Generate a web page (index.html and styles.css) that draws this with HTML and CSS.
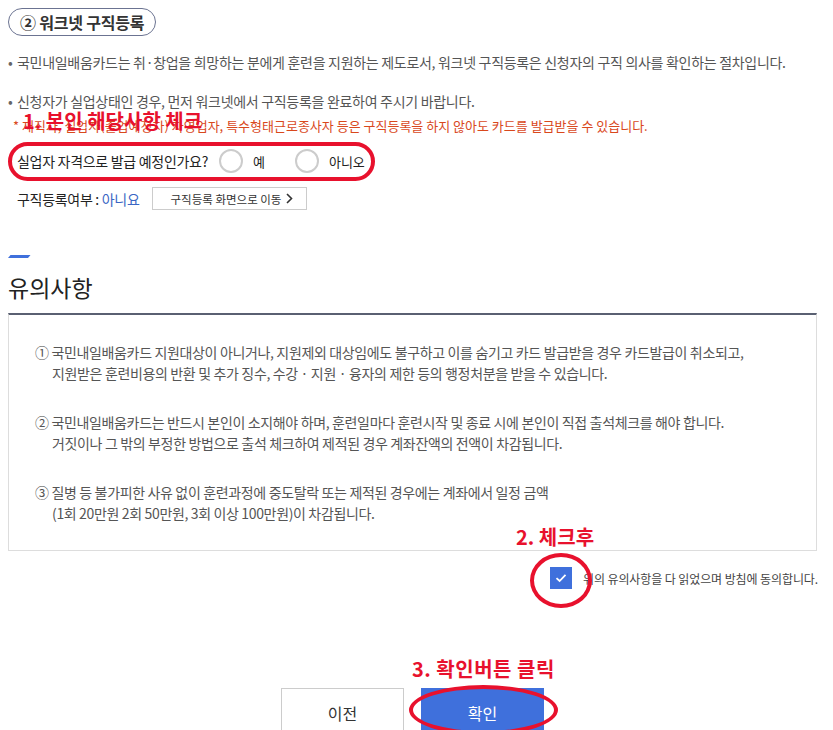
FILE: index.html
```html
<!DOCTYPE html>
<html>

<head>
    <meta name="viewport" content="width=device-width, initial-scale=1.0">
    <title>워크넷 구직등록</title>
    <link rel="stylesheet" href="styles.css">
</head>

<body>
    <div class="page">
        <div class="step-badge">② 워크넷 구직등록</div>

        <ul class="info-list">
            <li>국민내일배움카드는 취·창업을 희망하는 분에게 훈련을 지원하는 제도로서, 워크넷 구직등록은 신청자의 구직 의사를 확인하는 절차입니다.</li>
            <li class="gap">신청자가 실업상태인 경우, 먼저 워크넷에서 구직등록을 완료하여 주시기 바랍니다.</li>
        </ul>
        <p class="warn-note">* 재직자, 실업자(졸업예정자) 자영업자, 특수형태근로종사자 등은 구직등록을 하지 않아도 카드를 발급받을 수 있습니다.</p>

        <div class="question-row">
            <span class="question">실업자 자격으로 발급 예정인가요?</span>
            <label class="radio"><span class="radio-dot"></span>예</label>
            <label class="radio"><span class="radio-dot"></span>아니오</label>
        </div>

        <div class="status-row">
            <span class="status-label">구직등록여부 : <em>아니요</em></span>
            <button class="link-button">구직등록 화면으로 이동
                <svg class="chevron" width="7" height="11" viewBox="0 0 7 11"><path d="M1 1 L5.5 5.5 L1 10" fill="none" stroke="#333" stroke-width="1.6"/></svg>
            </button>
        </div>

        <div class="section-mark"></div>
        <h2 class="section-title">유의사항</h2>

        <div class="notice-box">
            <p class="notice-item">① 국민내일배움카드 지원대상이 아니거나, 지원제외 대상임에도 불구하고 이를 숨기고 카드 발급받을 경우 카드발급이 취소되고,<br><span class="indent">지원받은 훈련비용의 반환 및 추가 징수, 수강 · 지원 · 융자의 제한 등의 행정처분을 받을 수 있습니다.</span></p>
            <p class="notice-item">② 국민내일배움카드는 반드시 본인이 소지해야 하며, 훈련일마다 훈련시작 및 종료 시에 본인이 직접 출석체크를 해야 합니다.<br><span class="indent">거짓이나 그 밖의 부정한 방법으로 출석 체크하여 제적된 경우 계좌잔액의 전액이 차감됩니다.</span></p>
            <p class="notice-item">③ 질병 등 불가피한 사유 없이 훈련과정에 중도탈락 또는 제적된 경우에는 계좌에서 일정 금액<br><span class="indent">(1회 20만원 2회 50만원, 3회 이상 100만원)이 차감됩니다.</span></p>
        </div>

        <div class="agree-row">
            <span class="checkbox">
                <svg width="12" height="10" viewBox="0 0 12 10"><path d="M1.5 5.2 L4.6 8 L10.5 1.8" fill="none" stroke="#fff" stroke-width="1.8"/></svg>
            </span>
            <span class="agree-text">위의 유의사항을 다 읽었으며 방침에 동의합니다.</span>
        </div>

        <div class="button-row">
            <button class="btn btn-prev">이전</button>
            <button class="btn btn-ok">확인</button>
        </div>

        <!-- guide annotations drawn on top of the capture -->
        <div class="mark-label mark-1">1. 본인 해당사항 체크</div>
        <div class="mark-ring ring-1"></div>
        <div class="mark-label mark-2">2. 체크후</div>
        <div class="mark-ring ring-2"></div>
        <div class="mark-label mark-3">3. 확인버튼 클릭</div>
        <div class="mark-ring ring-3"></div>
    </div>
</body>

</html>
```

FILE: styles.css
```css
:root {
    --text-dark: #222;
    --text-gray: #555;
    --blue: #3f70dc;
    --mark-red: #e8112d;
    --line: #ddd;
}

body {
    margin: 0;
    background: #fff;
    font-family: "Noto Sans CJK KR", "Noto Sans", sans-serif;
    color: var(--text-dark);
    overflow: hidden;
}

.page {
    position: relative;
    width: 833px;
    height: 730px;
    padding: 8px;
    box-sizing: border-box;
}

.step-badge {
    display: inline-flex;
    align-items: center;
    height: 28px;
    padding: 0 11px;
    box-sizing: border-box;
    border: 1px solid #6b7391;
    border-radius: 14px;
    font-size: 16px;
    font-weight: 700;
    color: #333;
    letter-spacing: -0.2px;
}

.info-list {
    list-style: none;
    margin: 16px 0 0;
    padding: 0;
}

.info-list li {
    position: relative;
    padding-left: 9px;
    font-size: 14px;
    line-height: 20px;
    color: var(--text-gray);
    letter-spacing: -0.3px;
}

.info-list li:before {
    content: "•";
    position: absolute;
    left: 0;
    top: 0;
    color: #666;
}

.info-list li.gap {
    margin-top: 19px;
}

.warn-note {
    margin: 5px 0 0 5px;
    font-size: 13px;
    line-height: 20px;
    color: #d9481c;
}

.question-row {
    display: flex;
    align-items: center;
    height: 24px;
    margin-top: 13px;
    padding-left: 9px;
    font-size: 14px;
}

.question {
    margin-right: 11px;
    letter-spacing: -0.3px;
}

.radio {
    display: flex;
    align-items: center;
    gap: 10px;
    font-size: 13px;
    margin-right: 30px;
}

.radio-dot {
    width: 24px;
    height: 24px;
    box-sizing: border-box;
    border: 2px solid #ccc;
    border-radius: 50%;
}

.status-row {
    display: flex;
    align-items: center;
    gap: 12px;
    margin-top: 14px;
    padding-left: 9px;
    height: 23px;
}

.status-label {
    font-size: 14px;
    letter-spacing: -0.3px;
}

.status-label em {
    font-style: normal;
    color: #3a66c4;
}

.link-button {
    display: flex;
    align-items: center;
    gap: 5px;
    height: 23px;
    padding: 0 13px 0 18px;
    border: 1px solid #ccc;
    background: #fff;
    font-family: inherit;
    font-size: 11.5px;
    color: #333;
}

.section-mark {
    width: 20px;
    height: 3px;
    margin-top: 45px;
    background: var(--blue);
    transform: skewX(-40deg);
    transform-origin: bottom left;
}

.section-title {
    margin: 14px 0 0;
    font-size: 23px;
    line-height: 30px;
    font-weight: 400;
    color: var(--text-dark);
}

.notice-box {
    margin: 11px 8px 0 0;
    border: 1px solid var(--line);
    border-top: 2px solid #5a6072;
    padding: 27px 26px 26px;
}

.notice-item {
    margin: 0;
    font-size: 14px;
    line-height: 21px;
    color: var(--text-gray);
    letter-spacing: -0.35px;
}

.notice-item + .notice-item {
    margin-top: 28px;
}

.indent {
    padding-left: 17px;
}

.agree-row {
    display: flex;
    align-items: center;
    justify-content: flex-end;
    gap: 11px;
    margin-top: 16px;
    padding-right: 7px;
}

.checkbox {
    display: flex;
    align-items: center;
    justify-content: center;
    width: 22px;
    height: 22px;
    background: var(--blue);
}

.agree-text {
    font-size: 12px;
    color: #444;
    letter-spacing: -0.1px;
}

.button-row {
    display: flex;
    justify-content: center;
    gap: 17px;
    margin: 99px 8px 0 0;
}

.btn {
    width: 123px;
    height: 50px;
    font-family: inherit;
    font-size: 16px;
    border: 1px solid #ccc;
    background: #fff;
    color: #333;
}

.btn-ok {
    border-color: var(--blue);
    background: var(--blue);
    color: #fff;
}

.mark-label {
    position: absolute;
    font-size: 20px;
    line-height: 29px;
    font-weight: 700;
    color: var(--mark-red);
    white-space: nowrap;
}

.mark-1 {
    left: 23px;
    top: 106px;
}

.mark-2 {
    left: 516px;
    top: 522px;
}

.mark-3 {
    left: 412px;
    top: 654px;
    letter-spacing: 0.5px;
}

.mark-ring {
    position: absolute;
    border: 4px solid var(--mark-red);
    border-radius: 50%;
    box-sizing: border-box;
}

.ring-1 {
    left: 8px;
    top: 142px;
    width: 367px;
    height: 39px;
    border-radius: 22px;
}

.ring-2 {
    left: 530px;
    top: 553px;
    width: 62px;
    height: 55px;
}

.ring-3 {
    left: 409px;
    top: 685px;
    width: 149px;
    height: 50px;
}
```
